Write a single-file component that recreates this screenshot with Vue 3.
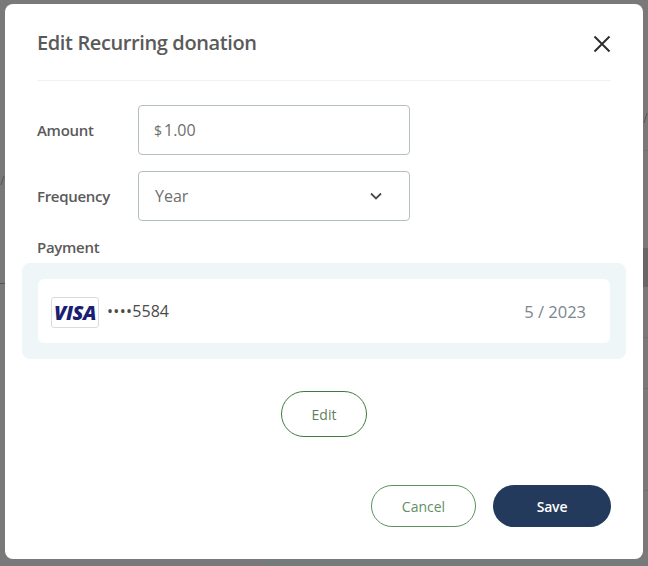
<template>
  <div class="page">
    <!-- page behind the overlay, only slivers show -->
    <div class="behind" aria-hidden="true">
      <span class="bLine left" />
      <span class="bLine r1" />
      <span class="bBand" />
      <span class="bLine r2" />
      <span class="bLine r3" />
      <span class="bLine r4" />
      <span class="bBottom" />
      <span class="bMark m1" />
      <span class="bMark m2" />
    </div>

    <div class="modal" role="dialog" aria-label="Edit Recurring donation">
      <header class="head">
        <h2 class="title">Edit Recurring donation</h2>
        <button class="close" aria-label="Close">
          <svg width="20" height="20" viewBox="0 0 20 20">
            <path d="M2.5 2.5 L17.5 17.5 M17.5 2.5 L2.5 17.5" stroke="#2b2b2b" stroke-width="1.9" fill="none" />
          </svg>
        </button>
      </header>

      <div class="row first">
        <label class="lbl">Amount</label>
        <div class="field amount"><span class="cur">$</span>{{ amount }}</div>
      </div>
      <div class="row second">
        <label class="lbl">Frequency</label>
        <div class="field select">
          <span>{{ frequency }}</span>
          <svg width="14" height="10" viewBox="0 0 14 10">
            <path d="M2 2.5 L7 7.5 L12 2.5" stroke="#4a4a4a" stroke-width="1.8" fill="none" />
          </svg>
        </div>
      </div>

      <div class="payLabel">Payment</div>
      <div class="panel">
        <div class="card">
          <div class="visa">VISA</div>
          <div class="num"><span class="dots">••••</span>{{ last4 }}</div>
          <div class="exp">{{ expiry }}</div>
        </div>
      </div>

      <div class="editWrap">
        <button class="pill edit">Edit</button>
      </div>

      <div class="actions">
        <button class="pill cancel">Cancel</button>
        <button class="pill save">Save</button>
      </div>
    </div>
  </div>
</template>

<script setup>
const amount = "1.00";
const frequency = "Year";
const last4 = "5584";
const expiry = "5 / 2023";
</script>

<style>
html, body { margin: 0; background: #797979; }
</style>

<style scoped>
.page {
  position: relative;
  width: 648px;
  height: 566px;
  overflow: hidden;
  background: #797979;
  padding: 4px 5px 7px;
  box-sizing: border-box;
  font-family: "Open Sans", sans-serif;
}

.behind { position: absolute; inset: 0; }
.bLine { position: absolute; height: 1px; background: #6f6f6f; }
.bLine.left { left: 0; width: 5px; top: 283px; background: #555; }
.bLine.r1 { right: 0; width: 5px; top: 150px; }
.bLine.r2 { right: 0; width: 5px; top: 337px; }
.bLine.r3 { right: 0; width: 5px; top: 388px; }
.bLine.r4 { right: 0; width: 5px; top: 490px; }
.bBand { position: absolute; right: 0; width: 5px; top: 248px; height: 39px; background: #666; }
.bBottom { position: absolute; left: 262px; right: 0; top: 559px; height: 7px; background: #757a7a; }
.bMark { position: absolute; width: 1px; height: 10px; background: #555; transform: skewX(-18deg); }
.bMark.m1 { left: 645px; top: 113px; }
.bMark.m2 { left: 2px; top: 176px; height: 9px; }

.modal {
  position: relative;
  height: 555px;
  background: #fff;
  border-radius: 8px;
  padding: 0 32px;
  box-sizing: border-box;
}

.head {
  height: 77px;
  display: flex;
  align-items: center;
  justify-content: space-between;
  border-bottom: 1px solid #f0f1f1;
  box-sizing: border-box;
}
.title {
  margin: 0;
  font-size: 20px;
  font-weight: 600;
  color: #5a5a5a;
  letter-spacing: -0.38px;
}
.close {
  border: 0;
  background: none;
  padding: 0;
  width: 20px;
  height: 20px;
  margin-top: 3px;
  margin-right: -1px;
}

.row { display: flex; align-items: center; }
.row.first { margin-top: 24px; }
.row.second { margin-top: 16px; }
.lbl {
  width: 101px;
  font-size: 15px;
  font-weight: 600;
  color: #5a5a5a;
  letter-spacing: -0.3px;
}
.field {
  width: 272px;
  height: 50px;
  box-sizing: border-box;
  border: 1px solid #b4bfc4;
  border-radius: 4px;
  font-size: 16px;
  color: #6e6e6e;
  display: flex;
  align-items: center;
  padding: 0 16px;
}
.amount { padding-left: 15px; }
.amount .cur { font-size: 14px; margin-right: 2px; }
.select { justify-content: space-between; padding-right: 26px; }

.payLabel {
  margin-top: 15px;
  font-size: 15px;
  font-weight: 600;
  color: #5a5a5a;
  letter-spacing: -0.3px;
  line-height: 22px;
}
.panel {
  margin: 5px -15px 0 -15px;
  padding: 16px;
  background: #eef6f8;
  border-radius: 8px;
}
.card {
  height: 64px;
  background: #fff;
  border-radius: 6px;
  display: flex;
  align-items: center;
  padding: 0 24px 0 13px;
}
.visa {
  width: 48px;
  height: 31px;
  margin-top: 3px;
  box-sizing: border-box;
  border: 1px solid #d9dcdd;
  border-radius: 3px;
  text-align: center;
  line-height: 29px;
  font-size: 20px;
  font-weight: 800;
  font-style: italic;
  color: #1a1f71;
  letter-spacing: -0.5px;
}
.num { margin-left: 8px; font-size: 16px; color: #4a4a4a; letter-spacing: 0.05px; }
.dots { letter-spacing: 0.3px; }
.exp { margin-left: auto; font-size: 16.5px; color: #7b8590; }

.editWrap { display: flex; justify-content: center; margin-top: 32px; }
.pill {
  font-family: inherit;
  border-radius: 24px;
  box-sizing: border-box;
  font-size: 14px;
  padding: 0;
  background: #fff;
}
.edit {
  width: 86px;
  height: 46px;
  border: 1px solid #3f7a3f;
  color: #5f7f60;
}
.actions {
  display: flex;
  justify-content: flex-end;
  gap: 17px;
  margin-top: 48px;
}
.cancel {
  width: 105px;
  height: 42px;
  border: 1px solid #5f9160;
  color: #5f8f62;
}
.save {
  width: 118px;
  height: 42px;
  border: 0;
  background: #233a5c;
  color: #fff;
  font-weight: 600;
  letter-spacing: -0.2px;
}
</style>
